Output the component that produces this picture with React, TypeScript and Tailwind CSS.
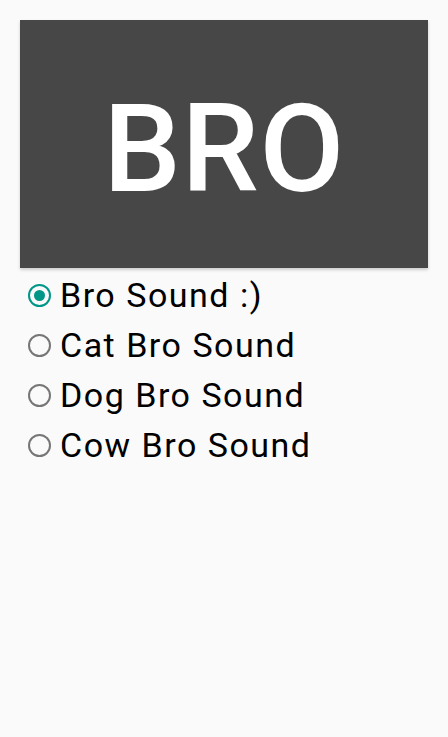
import { useState } from "react"

const sounds = ["Bro Sound :)", "Cat Bro Sound", "Dog Bro Sound", "Cow Bro Sound"]

export default function App() {
  const [selected, setSelected] = useState(0)

  return (
    <div
      className="min-h-[737px] w-full bg-[#fafafa] px-5 pt-5"
      style={{ fontFamily: "Roboto, 'Liberation Sans', sans-serif" }}
    >
      {/* 横幅 */}
      <div className="flex h-[248px] items-center justify-center bg-[#474747] pt-[10px] shadow-[0_2px_3px_rgba(0,0,0,0.18)]">
        <span className="text-[123px] font-medium leading-none tracking-[0.5px] text-white">BRO</span>
      </div>

      {/* 单选列表 */}
      <div className="flex flex-col pt-[2px]">
        {sounds.map((label, i) => {
          const on = i === selected
          return (
            <button
              key={label}
              type="button"
              onClick={() => setSelected(i)}
              className="flex h-[50px] items-center gap-[9px] pl-[8px] text-left"
            >
              <span
                className={
                  on
                    ? "flex size-[23px] shrink-0 items-center justify-center rounded-full border-[2.5px] border-[#009688]"
                    : "flex size-[23px] shrink-0 items-center justify-center rounded-full border-[2.5px] border-[#767676]"
                }
              >
                {on && <span className="size-[11px] rounded-full bg-[#009688]" />}
              </span>
              <span className="text-[34px] leading-none tracking-[1.5px] text-black">{label}</span>
            </button>
          )
        })}
      </div>
    </div>
  )
}
